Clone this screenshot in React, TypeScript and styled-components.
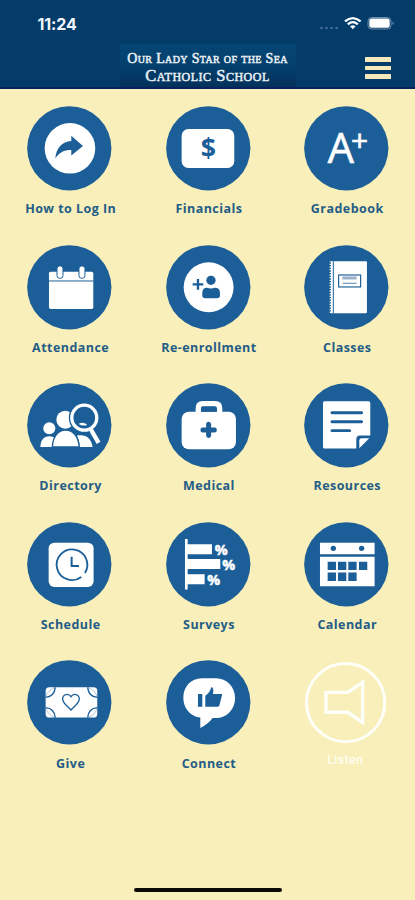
import React from 'react';
import styled, { createGlobalStyle } from 'styled-components';

const BLUE = '#1c5f98';

const GlobalStyle = createGlobalStyle`
  * { box-sizing: border-box; }
  body { margin: 0; background: #f9efba; }
`;

const Screen = styled.div`
  display: flex;
  flex-direction: column;
  width: 415px;
  height: 900px;
  overflow: hidden;
  background: #f9efba;
  font-family: 'Open Sans', 'Noto Sans', sans-serif;
`;

const Header = styled.header`
  height: 89px;
  flex: none;
  background: #033b69;
  border-bottom: 2px solid #07205f;
`;

const StatusBar = styled.div`
  display: flex;
  align-items: center;
  justify-content: space-between;
  height: 44px;
  padding: 3px 21px 0 37.5px;
`;

const Clock = styled.span`
  font: 700 16px/20px Inter, sans-serif;
  letter-spacing: -0.1px;
  color: #f2f6fc;
`;

const StatusIcons = styled.svg`
  width: 76px;
  height: 16px;
  display: block;
`;

const NavBar = styled.div`
  display: grid;
  grid-template-columns: 1fr 176px 1fr;
  height: 43px;
`;

const Brand = styled.div`
  grid-column: 2;
  display: flex;
  flex-direction: column;
  align-items: center;
  padding-top: 6px;
  background: linear-gradient(#064674, #04406e 50%, #03315b);
  color: #e9f0f5;
  font-family: 'Liberation Serif', serif;
  font-variant-caps: small-caps;
  white-space: nowrap;
`;

const BrandLine = styled.span<{ $size: number; $spacing: number }>`
  font-size: ${(p) => p.$size}px;
  line-height: 17px;
  letter-spacing: ${(p) => p.$spacing}px;
  -webkit-text-stroke: 0.5px #e9f0f5;
`;

const MenuButton = styled.button`
  display: flex;
  flex-direction: column;
  justify-self: end;
  gap: 4px;
  margin: 13px 24px 0 0;
  padding: 0;
  border: 0;
  background: none;
`;

const MenuLine = styled.span`
  width: 26px;
  height: 4.6px;
  border-radius: 0.5px;
  background: #f5e9bb;
`;

const Grid = styled.main`
  display: grid;
  grid-template-columns: repeat(3, 138.3px);
  grid-auto-rows: 138.6px;
  padding: 17px 0 0 0.5px;
  flex: 1;
  align-content: start;
`;

const Tile = styled.div`
  display: flex;
  flex-direction: column;
  align-items: center;
`;

const Disc = styled.svg`
  width: 84.6px;
  height: 84.6px;
  display: block;
  overflow: visible;
`;

const Label = styled.span<{ $muted?: boolean }>`
  margin: ${(p) => (p.$muted ? '6px 2px 0 0' : '9.6px 0 0 2px')};
  font: ${(p) => (p.$muted ? "500 12.5px/18px Roboto, sans-serif" : "700 12.5px/18px 'Open Sans', sans-serif")};
  letter-spacing: ${(p) => (p.$muted ? 0.3 : 0.45)}px;
  color: ${(p) => (p.$muted ? '#fffdf0' : '#235c86')};
  white-space: nowrap;
`;

const Footer = styled.footer`
  display: flex;
  justify-content: center;
  height: 13px;
  flex: none;
`;

const HomeIndicator = styled.div`
  width: 148px;
  height: 4.4px;
  margin-top: 1px;
  border-radius: 3px;
  background: #0b0a04;
`;

const Glyph = styled.text`
  font-family: 'Open Sans', sans-serif;
`;

const ShareIcon = () => (
  <>
    <circle cx="129" cy="127" r="76" fill="#fff" />
    <path d="M85 158C88 125 105 107 133 105V89L168 120L133 149V132C111 132 96 139 85 158Z" fill={BLUE} />
  </>
);

const MoneyIcon = () => (
  <>
    <rect x="47" y="69" width="158" height="117" rx="20" fill="#fff" />
    <Glyph x="127" y="154" fontSize="80" fontWeight="700" textAnchor="middle" fill={BLUE}>$</Glyph>
  </>
);

const GradeIcon = () => (
  <g fill="#fff" stroke="#fff" strokeWidth="2">
    <Glyph x="71" y="171" fontSize="124">
      A<tspan x="141" y="134" fontSize="90">+</tspan>
    </Glyph>
  </g>
);

const AttendanceIcon = () => (
  <>
    <rect x="66" y="80" width="133" height="112" rx="5" fill="#fff" />
    <path d="M66 108H199" stroke={BLUE} strokeWidth="3" />
    <g fill="#fff" stroke={BLUE} strokeWidth="3">
      <rect x="90" y="63" width="18" height="37" rx="8" />
      <rect x="156" y="63" width="18" height="37" rx="8" />
    </g>
  </>
);

const EnrollIcon = () => (
  <>
    <circle cx="128" cy="127" r="75" fill="#fff" />
    <path d="M80 118H112M96 102V134" stroke={BLUE} strokeWidth="7" />
    <circle cx="135" cy="106" r="14" fill={BLUE} />
    <path d="M109 144Q109 128 123 128Q135 133 147 128Q162 128 162 144V152Q162 160 153 160H118Q109 160 109 152Z" fill={BLUE} />
  </>
);

const NotebookIcon = () => (
  <>
    <rect x="77" y="49" width="112" height="156" rx="3" fill="#fff" />
    <path d="M78 52V205" stroke={BLUE} strokeWidth="6" strokeDasharray="4 4" />
    <path d="M88 49V205" stroke={BLUE} strokeWidth="3" />
    <rect x="104" y="90" width="66" height="36" fill="none" stroke={BLUE} strokeWidth="3.5" />
    <path d="M115 99H158" stroke="#9db0cc" strokeWidth="9" />
    <path d="M116 115H158" stroke="#6f94ba" strokeWidth="3.5" />
  </>
);

const DirectoryIcon = () => (
  <>
    <g fill="#fff">
      <circle cx="67" cy="136" r="18" />
      <path d="M40 192C41 168 54 160 67 160Q78 160 84 165L76 192Z" />
      <circle cx="115" cy="110" r="27" />
      <path d="M158 192C158 175 153 165 150 158C178 153 194 168 197 192Z" />
    </g>
    <path d="M76 192C78 158 95 141 116 141S154 158 157 192Z" fill="#fff" stroke={BLUE} strokeWidth="4" />
    <path d="M60 196H210" stroke={BLUE} strokeWidth="7" />
    <path d="M193 142L216 181" stroke={BLUE} strokeWidth="20" />
    <circle cx="172" cy="104" r="42" fill={BLUE} stroke={BLUE} strokeWidth="9" />
    <circle cx="172" cy="104" r="37.5" fill={BLUE} stroke="#fff" strokeWidth="10" />
    <path d="M155 123Q168 115 181 126Q168 131 155 123Z" fill="#fff" />
    <path d="M191 138L215 180" stroke="#fff" strokeWidth="13" />
  </>
);

const MedicalIcon = () => (
  <>
    <rect x="47" y="86" width="163" height="113" rx="22" fill="#fff" />
    <path d="M97 90V76Q97 62 111 62H147Q161 62 161 76V90" fill="none" stroke="#fff" strokeWidth="16" />
    <path d="M105 86V78Q105 71 112 71H145Q152 71 152 78V86Z" fill={BLUE} />
    <path d="M111 141H145M128 124V158" stroke={BLUE} strokeWidth="15" strokeLinecap="round" />
  </>
);

const NoteIcon = () => (
  <>
    <path d="M62 55H194Q199 55 199 60V158H168Q157 158 157 169V197H62Q57 197 57 192V60Q57 55 62 55Z" fill="#fff" />
    <path d="M84 89H173M84 116H173M84 143H137" stroke={BLUE} strokeWidth="9" strokeLinecap="round" />
    <path d="M166 196V173Q166 166 173 166H196Z" fill="#fff" />
  </>
);

const ScheduleIcon = () => (
  <>
    <rect x="65" y="62" width="135" height="133" rx="17" fill="#fff" />
    <path d="M163 165A46 46 0 1 1 174 153" fill="none" stroke={BLUE} strokeWidth="5.5" />
    <path d="M134 104V132H156" fill="none" stroke={BLUE} strokeWidth="6" />
  </>
);

const SurveyIcon = () => (
  <g fill="#fff">
    <path d="M57 51H65V67H138V97H65V111H163V141H65V157H116V187H65V203H57Z" />
    <g fontSize="43" fontWeight="700" textAnchor="middle" stroke="#fff" strokeWidth="1.5">
      <Glyph x="166" y="98">%</Glyph>
      <Glyph x="188" y="143">%</Glyph>
      <Glyph x="143" y="189">%</Glyph>
    </g>
  </g>
);

const CalendarIcon = () => (
  <>
    <path d="M48 62H212V97H48ZM48 104H212V193H48Z" fill="#fff" />
    <circle cx="88" cy="79" r="8" fill={BLUE} />
    <circle cx="173" cy="79" r="8" fill={BLUE} />
    <path
      d="M71 119h25v25h-25zM102 119h25v25h-25zM133 119h25v25h-25zM165 119h25v25h-25zM71 152h25v25h-25zM102 152h25v25h-25zM133 152h25v25h-25z"
      fill={BLUE}
    />
  </>
);

const GiveIcon = () => (
  <>
    <rect x="56" y="82" width="155" height="91" rx="11" fill="#fff" />
    <g fill="none" stroke={BLUE} strokeWidth="4">
      <path d="M56 112Q82 110 85 82M182 82Q185 110 211 112M56 143Q82 145 85 173M182 173Q185 145 211 143" />
      <path d="M56 112Q60 92 85 82M182 82Q207 92 211 112M56 143Q60 163 85 173M182 173Q207 163 211 143" strokeWidth="1" />
      <path d="M132 150C122 139 107 130 107 117C107 102 125 99 132 110C139 99 157 102 157 117C157 130 142 139 132 150Z" />
    </g>
  </>
);

const ConnectIcon = () => (
  <>
    <path d="M108 55H151A56 59 0 0 1 151 174H140Q127 192 103 204V173C74 170 52 145 52 114C52 80 75 55 108 55Z" fill="#fff" />
    <path d="M96 102H109V140H96ZM118 107Q132 98 136 81Q145 84 141 102H169L160 137Q158 140 154 140H118Z" fill={BLUE} />
  </>
);

const ListenIcon = () => (
  <g fill="none" stroke="#fffffa" strokeWidth="9">
    <circle cx="125" cy="128" r="117.5" />
    <path d="M66 97H131L176 67V187L131 157H66Z" strokeWidth="10" />
  </g>
);

interface TileData {
  label: string;
  Icon: () => React.ReactElement;
  muted?: boolean;
}

const tiles: TileData[] = [
  { label: 'How to Log In', Icon: ShareIcon },
  { label: 'Financials', Icon: MoneyIcon },
  { label: 'Gradebook', Icon: GradeIcon },
  { label: 'Attendance', Icon: AttendanceIcon },
  { label: 'Re-enrollment', Icon: EnrollIcon },
  { label: 'Classes', Icon: NotebookIcon },
  { label: 'Directory', Icon: DirectoryIcon },
  { label: 'Medical', Icon: MedicalIcon },
  { label: 'Resources', Icon: NoteIcon },
  { label: 'Schedule', Icon: ScheduleIcon },
  { label: 'Surveys', Icon: SurveyIcon },
  { label: 'Calendar', Icon: CalendarIcon },
  { label: 'Give', Icon: GiveIcon },
  { label: 'Connect', Icon: ConnectIcon },
  { label: 'Listen', Icon: ListenIcon, muted: true },
];

export default function App() {
  return (
    <Screen>
      <GlobalStyle />
      <Header>
        <StatusBar>
          <Clock>11:24</Clock>
          <StatusIcons viewBox="0 0 76 16">
            <g fill="#456f96">
              <circle cx="3.5" cy="12" r="1.3" />
              <circle cx="8.5" cy="12" r="1.3" />
              <circle cx="13.5" cy="12" r="1.3" />
              <circle cx="18.5" cy="12" r="1.3" />
            </g>
            <g fill="none" stroke="#fff" strokeWidth="2.3">
              <path d="M27 5.4Q34.8 -1.2 42.6 5.4" />
              <path d="M29.8 8.3Q34.8 4 39.8 8.3" />
            </g>
            <path d="M32 10.2Q34.8 8.2 37.6 10.2L34.8 13.3Z" fill="#fff" />
            <rect x="50" y="1.5" width="23" height="11.5" rx="3.5" fill="none" stroke="#6d8dac" />
            <rect x="51.3" y="2.6" width="20.4" height="9.2" rx="2.2" fill="#fff" />
            <path d="M74.6 5.5Q76.5 7.2 74.6 9Z" fill="#8aa5bf" />
          </StatusIcons>
        </StatusBar>
        <NavBar>
          <Brand>
            <BrandLine $size={14} $spacing={0.35}>Our Lady Star of the Sea</BrandLine>
            <BrandLine $size={16.5} $spacing={0.5}>Catholic School</BrandLine>
          </Brand>
          <MenuButton aria-label="Menu">
            <MenuLine />
            <MenuLine />
            <MenuLine />
          </MenuButton>
        </NavBar>
      </Header>
      <Grid>
        {tiles.map(({ label, Icon, muted }) => (
          <Tile key={label}>
            <Disc viewBox="0 0 254 254">
              {!muted && <circle cx="127" cy="127" r="126.5" fill={BLUE} />}
              <Icon />
            </Disc>
            <Label $muted={muted}>{label}</Label>
          </Tile>
        ))}
      </Grid>
      <Footer>
        <HomeIndicator />
      </Footer>
    </Screen>
  );
}
